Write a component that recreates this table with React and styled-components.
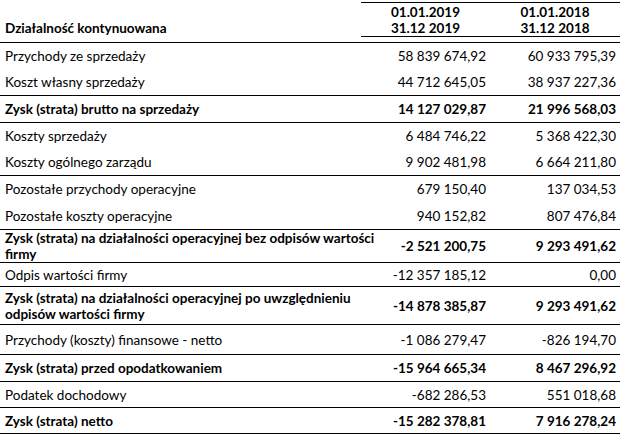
import React from 'react';
import styled, { createGlobalStyle } from 'styled-components';

const GlobalStyle = createGlobalStyle`
  body {
    margin: 0;
    background: #fff;
  }
  * {
    box-sizing: border-box;
  }
`;

const Table = styled.div`
  width: 620px;
  font-family: Lato, "Liberation Sans", sans-serif;
  font-size: 13.5px;
  color: #000;
  border-bottom: 1px solid #000;
`;

const HeaderRow = styled.div`
  display: grid;
  grid-template-columns: 361px 259px;
  height: 43px;
  padding-top: 2px;
  border-bottom: 1px solid #000;
`;

const Heading = styled.div`
  align-self: end;
  padding: 0 0 6px 5px;
  font-weight: 700;
`;

const PeriodGroup = styled.div`
  display: grid;
  grid-template-columns: 129px 130px;
  height: 35px;
  border-top: 1px solid #000;
  border-bottom: 1px solid #000;
`;

const Period = styled.div`
  text-align: center;
  font-weight: 700;
  line-height: 16px;
  padding-top: 1px;
`;

const Row = styled.div`
  display: grid;
  grid-template-columns: 361px 129px 130px;
  align-items: center;
  height: ${p => p.h}px;
  border-top: ${p => (p.rule ? '1px solid #000' : '0')};
  font-weight: ${p => (p.bold ? 700 : 400)};
`;

const Label = styled.div`
  padding-left: 5px;
  line-height: 16px;
  white-space: pre;
`;

const Value = styled.div`
  text-align: right;
  padding-right: 4px;
`;

const rows = [
  { label: 'Przychody ze sprzedaży', a: '58 839 674,92', b: '60 933 795,39', h: 26 },
  { label: 'Koszt własny sprzedaży', a: '44 712 645,05', b: '38 937 227,36', h: 26 },
  { label: 'Zysk (strata) brutto na sprzedaży', a: '14 127 029,87', b: '21 996 568,03', h: 27, bold: true, rule: true },
  { label: 'Koszty sprzedaży', a: '6 484 746,22', b: '5 368 422,30', h: 26, rule: true },
  { label: 'Koszty ogólnego zarządu', a: '9 902 481,98', b: '6 664 211,80', h: 27 },
  { label: 'Pozostałe przychody operacyjne', a: '679 150,40', b: '137 034,53', h: 27, rule: true },
  { label: 'Pozostałe koszty operacyjne', a: '940 152,82', b: '807 476,84', h: 27 },
  { label: 'Zysk (strata) na działalności operacyjnej bez odpisów wartości\nfirmy', a: '-2 521 200,75', b: '9 293 491,62', h: 33, bold: true, rule: true },
  { label: 'Odpis wartości firmy', a: '-12 357 185,12', b: '0,00', h: 24, rule: true },
  { label: 'Zysk (strata) na działalności operacyjnej po uwzględnieniu\nodpisów wartości firmy', a: '-14 878 385,87', b: '9 293 491,62', h: 38, bold: true, rule: true },
  { label: 'Przychody (koszty) finansowe - netto', a: '-1 086 279,47', b: '-826 194,70', h: 30, rule: true },
  { label: 'Zysk (strata) przed opodatkowaniem', a: '-15 964 665,34', b: '8 467 296,92', h: 27, bold: true, rule: true },
  { label: 'Podatek dochodowy', a: '-682 286,53', b: '551 018,68', h: 26, rule: true },
  { label: 'Zysk (strata) netto', a: '-15 282 378,81', b: '7 916 278,24', h: 26, bold: true, rule: true },
];

export default function App() {
  return (
    <>
      <GlobalStyle />
      <Table>
        <HeaderRow>
          <Heading>Działalność kontynuowana</Heading>
          <PeriodGroup>
            <Period>01.01.2019<br />31.12 2019</Period>
            <Period>01.01.2018<br />31.12 2018</Period>
          </PeriodGroup>
        </HeaderRow>
        {rows.map(r => (
          <Row key={r.label} h={r.h} bold={r.bold} rule={r.rule}>
            <Label>{r.label}</Label>
            <Value>{r.a}</Value>
            <Value>{r.b}</Value>
          </Row>
        ))}
      </Table>
    </>
  );
}
